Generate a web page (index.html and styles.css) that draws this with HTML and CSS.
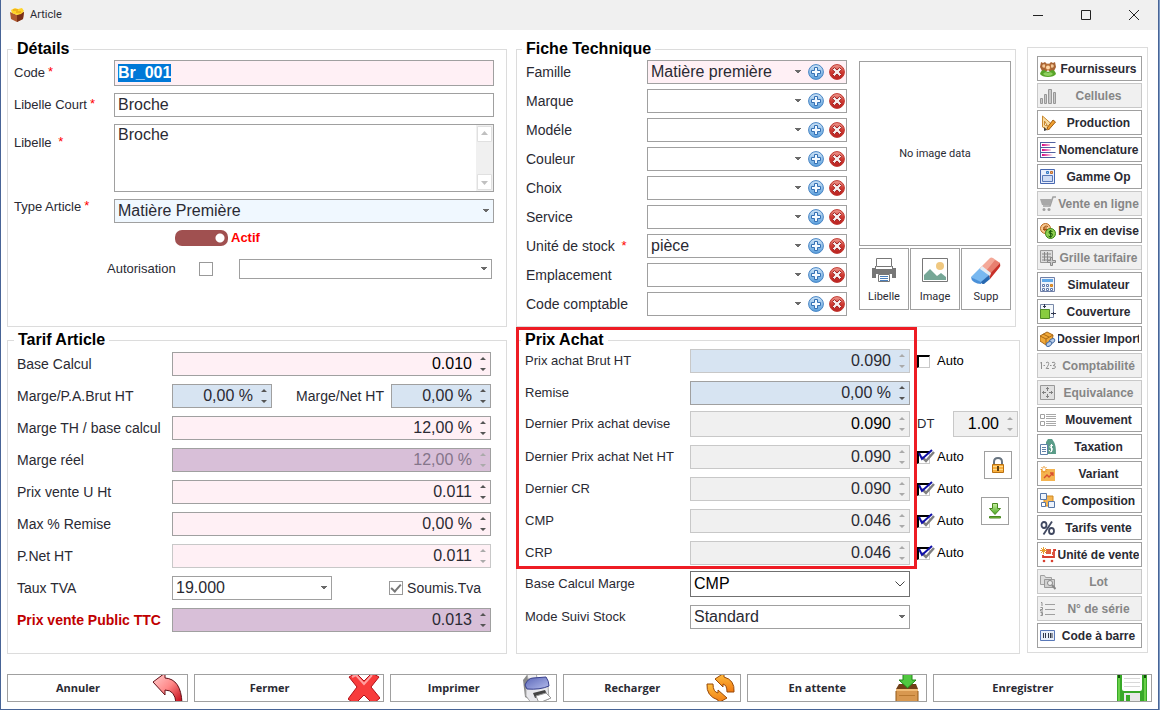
FILE: index.html
```html
<!DOCTYPE html>
<html lang="fr">
<head>
<meta charset="utf-8">
<title>Article</title>
<link rel="stylesheet" href="styles.css">
</head>
<body>
<svg class="sprite" aria-hidden="true">
  <defs>
    <linearGradient id="gBlue" x1="0" y1="0" x2="0" y2="1"><stop offset="0" stop-color="#cfe4f7"/><stop offset="1" stop-color="#5a9fdc"/></linearGradient>
    <linearGradient id="gRed" x1="0" y1="0" x2="0" y2="1"><stop offset="0" stop-color="#f0a096"/><stop offset=".5" stop-color="#d03a32"/><stop offset="1" stop-color="#b82020"/></linearGradient>
    <linearGradient id="gArrow" x1="0" y1="0" x2="1" y2="1"><stop offset="0" stop-color="#ffd0d0"/><stop offset=".5" stop-color="#f88"/><stop offset="1" stop-color="#c00010"/></linearGradient>
    <linearGradient id="gOrange" x1="0" y1="0" x2="0" y2="1"><stop offset="0" stop-color="#ffc040"/><stop offset="1" stop-color="#f07810"/></linearGradient>
    <linearGradient id="gPink" x1="0" y1="0" x2="1" y2="0"><stop offset="0" stop-color="#d8007c"/><stop offset="1" stop-color="#fff"/></linearGradient>
    <linearGradient id="gGreen" x1="0" y1="0" x2="0" y2="1"><stop offset="0" stop-color="#c8f0a0"/><stop offset="1" stop-color="#48a820"/></linearGradient>
    <linearGradient id="gLid" x1="0" y1="0" x2="1" y2="1"><stop offset="0" stop-color="#5a66b8"/><stop offset="1" stop-color="#b4bcec"/></linearGradient>
  </defs>
  <symbol id="caret" viewBox="0 0 8 4"><path d="M1 0h6v1H6v1H5v1H3V2H2V1H1z" fill="#6a6a6a"/></symbol>
  <symbol id="spin" viewBox="0 0 6 14"><path d="M0 3h6L3 0zM0 11h6l-3 3z" fill="currentColor"/></symbol>
  <symbol id="add" viewBox="0 0 16 16"><circle cx="8" cy="8" r="7.400" fill="url(#gBlue)" stroke="#4784c4"/><path d="M6.500 3.500h3v3h3v3h-3v3h-3v-3h-3v-3h3z" fill="#f4faff" stroke="#3470b4"/></symbol>
  <symbol id="del" viewBox="0 0 16 16"><circle cx="8" cy="8" r="7.400" fill="url(#gRed)" stroke="#c03830"/><path d="M5.400 3.600 8 6l2.600-2.400 2 2L10.200 8l2.400 2.400-2 2L8 10l-2.600 2.400-2-2L5.800 8 3.400 5.600z" fill="#f6eeee" stroke="#a02020"/></symbol>
  <symbol id="tick" viewBox="0 0 18 15"><path d="M5 8l4 4 8-9" fill="none" stroke="#808080" stroke-width="2.500"/><path d="M2 4l3 6L15 1" fill="none" stroke="#1010a8" stroke-width="2"/></symbol>
</svg>

<div class="window">
  <header class="titlebar">
    <svg width="16" height="16" viewBox="0 0 16 16"><path d="M1 5l7 3 7-3-1 7-6 3-6-3z" fill="#b05a30"/><path d="M8 8v7l6-3 1-7z" fill="#7a3018"/><path d="M2 3l4-2 3 1 4-1 2 3-3 3-4 1-5-2z" fill="#ffd428"/><path d="M4 3h5M7 5h5" stroke="#e09010"/></svg>
    <span class="title">Article</span>
    <button class="wbtn" aria-label="Réduire"><svg width="12" height="12"><path d="M1 6.500h10" stroke="#222"/></svg></button>
    <button class="wbtn" aria-label="Agrandir"><svg width="12" height="12"><path d="M1.500 1.500h9v9h-9z" fill="none" stroke="#222"/></svg></button>
    <button class="wbtn" aria-label="Fermer la fenêtre"><svg width="12" height="12"><path d="M1 1l10 10M11 1L1 11" stroke="#222"/></svg></button>
  </header>

  <main class="panels">
    <fieldset class="panel details">
      <legend>Détails</legend>
      <div class="row">
        <label for="code">Code<sup>*</sup></label>
        <input id="code" class="box pink code" type="text" value="Br_001">
      </div>
      <div class="row">
        <label for="court">Libelle Court<sup>*</sup></label>
        <input id="court" class="box" type="text" value="Broche">
      </div>
      <div class="row top">
        <label for="libelle">Libelle <sup>*</sup></label>
        <div class="box memo">
          <textarea id="libelle">Broche</textarea>
          <div class="scroll"><svg viewBox="0 0 15 16"><path d="M.5.500h14v15H.500z" fill="#fff" stroke="#e0e0e0"/><path d="M4 9h7L7.500 5z" fill="#c0c0c0"/></svg><svg viewBox="0 0 15 16"><path d="M.5.500h14v15H.500z" fill="#fff" stroke="#e0e0e0"/><path d="M4 7h7l-3.500 4z" fill="#c0c0c0"/></svg></div>
        </div>
      </div>
      <div class="row kind">
        <label for="type">Type Article<sup>*</sup></label>
        <div class="box alice combo"><select id="type"><option>Matière Première</option></select><svg class="caret"><use href="#caret"/></svg></div>
      </div>
      <label class="switch"><input type="checkbox" checked>Actif</label>
      <div class="auth">
        <label for="auth">Autorisation</label>
        <input id="auth" class="flatcheck" type="checkbox">
        <div class="box combo short"><select aria-label="Type d'autorisation"><option></option></select><svg class="caret"><use href="#caret"/></svg></div>
      </div>
    </fieldset>

    <fieldset class="panel fiche">
      <legend>Fiche Technique</legend>
      <div class="fiche-body">
        <div class="fiche-rows">
          <div class="row"><label for="f1">Famille</label><div class="box pink combo"><select id="f1"><option>Matière première</option></select><svg class="caret"><use href="#caret"/></svg><button class="ic" aria-label="Ajouter"><svg><use href="#add"/></svg></button><button class="ic" aria-label="Effacer"><svg><use href="#del"/></svg></button></div></div>
          <div class="row"><label for="f2">Marque</label><div class="box combo"><select id="f2"><option></option></select><svg class="caret"><use href="#caret"/></svg><button class="ic" aria-label="Ajouter"><svg><use href="#add"/></svg></button><button class="ic" aria-label="Effacer"><svg><use href="#del"/></svg></button></div></div>
          <div class="row"><label for="f3">Modéle</label><div class="box combo"><select id="f3"><option></option></select><svg class="caret"><use href="#caret"/></svg><button class="ic" aria-label="Ajouter"><svg><use href="#add"/></svg></button><button class="ic" aria-label="Effacer"><svg><use href="#del"/></svg></button></div></div>
          <div class="row"><label for="f4">Couleur</label><div class="box combo"><select id="f4"><option></option></select><svg class="caret"><use href="#caret"/></svg><button class="ic" aria-label="Ajouter"><svg><use href="#add"/></svg></button><button class="ic" aria-label="Effacer"><svg><use href="#del"/></svg></button></div></div>
          <div class="row"><label for="f5">Choix</label><div class="box combo"><select id="f5"><option></option></select><svg class="caret"><use href="#caret"/></svg><button class="ic" aria-label="Ajouter"><svg><use href="#add"/></svg></button><button class="ic" aria-label="Effacer"><svg><use href="#del"/></svg></button></div></div>
          <div class="row"><label for="f6">Service</label><div class="box combo"><select id="f6"><option></option></select><svg class="caret"><use href="#caret"/></svg><button class="ic" aria-label="Ajouter"><svg><use href="#add"/></svg></button><button class="ic" aria-label="Effacer"><svg><use href="#del"/></svg></button></div></div>
          <div class="row"><label for="f7">Unité de stock <sup>*</sup></label><div class="box combo"><select id="f7"><option>pièce</option></select><svg class="caret"><use href="#caret"/></svg><button class="ic" aria-label="Ajouter"><svg><use href="#add"/></svg></button><button class="ic" aria-label="Effacer"><svg><use href="#del"/></svg></button></div></div>
          <div class="row"><label for="f8">Emplacement</label><div class="box combo"><select id="f8"><option></option></select><svg class="caret"><use href="#caret"/></svg><button class="ic" aria-label="Ajouter"><svg><use href="#add"/></svg></button><button class="ic" aria-label="Effacer"><svg><use href="#del"/></svg></button></div></div>
          <div class="row"><label for="f9">Code comptable</label><div class="box combo"><select id="f9"><option></option></select><svg class="caret"><use href="#caret"/></svg><button class="ic" aria-label="Ajouter"><svg><use href="#add"/></svg></button><button class="ic" aria-label="Effacer"><svg><use href="#del"/></svg></button></div></div>
        </div>
        <div class="picture">
          <div class="preview">No image data</div>
          <div class="picture-tools">
            <button><svg width="32" height="32" viewBox="0 0 32 32"><path d="M8.500 4.500h15v8h-15z" fill="#fff" stroke="#777"/><path d="M4 14h3v-2h1v3h16v-3h1v2h3v10h-4v-4H8v4H4z" fill="#777"/><path d="M10.500 20.500h11v7h-11z" fill="#fff" stroke="#777"/><path d="M12 22.500h8M12 24.500h8M12 26.500h8" stroke="#4a7ebb"/></svg>Libelle</button>
            <button><svg width="32" height="32" viewBox="0 0 32 32"><path d="M3.500 4.500h25v23h-25z" fill="#fff" stroke="#777"/><circle cx="21" cy="12" r="4" fill="#f0c880"/><path d="M5 26v-5l6-6 7 7 4-3 5 4v3z" fill="#76a797"/></svg>Image</button>
            <button><svg width="32" height="32" viewBox="0 0 32 32"><path d="M10 14L20 4q1-1 3 0l7 5-11 12z" fill="#f4a898"/><path d="M16 17L25 6l5 3-11 13z" fill="#e88070"/><path d="M19 21L30 9q1 3-1 5L20 25z" fill="#c83028"/><path d="M1 23l9-9 9 7-8 8z" fill="#78b8f0"/><path d="M11 28l8-7 1 4-6 5q-3 0-3-2z" fill="#2868b0"/><path d="M1 23l10 5v2q-4 0-7-2-3-2-3-5z" fill="#4a90d8"/><path d="M12 12l9 7-1 3-10-7z" fill="#e4ecf4"/></svg>Supp</button>
          </div>
        </div>
      </div>
    </fieldset>

    <fieldset class="panel tarif">
      <legend>Tarif Article</legend>
      <div class="row"><label for="t1">Base Calcul</label><div class="box pink num black"><input id="t1" type="text" value="0.010"><svg><use href="#spin"/></svg></div></div>
      <div class="row"><label for="t2">Marge/P.A.Brut HT</label><div class="box blue num small"><input id="t2" type="text" value="0,00 %"><svg><use href="#spin"/></svg></div><label for="t3" class="second">Marge/Net HT</label><div class="box blue num small"><input id="t3" type="text" value="0,00 %"><svg><use href="#spin"/></svg></div></div>
      <div class="row"><label for="t4">Marge TH / base calcul</label><div class="box pink num"><input id="t4" type="text" value="12,00 %"><svg><use href="#spin"/></svg></div></div>
      <div class="row"><label for="t5">Marge réel</label><div class="box thistle num muted"><input id="t5" type="text" value="12,00 %" readonly><svg><use href="#spin"/></svg></div></div>
      <div class="row"><label for="t6">Prix vente U Ht</label><div class="box pink num"><input id="t6" type="text" value="0.011"><svg><use href="#spin"/></svg></div></div>
      <div class="row"><label for="t7">Max % Remise</label><div class="box pink num"><input id="t7" type="text" value="0,00 %"><svg><use href="#spin"/></svg></div></div>
      <div class="row"><label for="t8">P.Net HT</label><div class="box pink num locked"><input id="t8" type="text" value="0.011" readonly><svg><use href="#spin"/></svg></div></div>
      <div class="row"><label for="t9">Taux TVA</label><div class="box combo rate"><select id="t9"><option>19.000</option></select><svg class="caret"><use href="#caret"/></svg></div><label class="taxed"><input class="flatcheck" type="checkbox" checked>Soumis.Tva</label></div>
      <div class="row"><label for="t10" class="ttc">Prix vente Public TTC</label><div class="box thistle num"><input id="t10" type="text" value="0.013"><svg><use href="#spin"/></svg></div></div>
    </fieldset>

    <fieldset class="panel prix">
      <legend>Prix Achat</legend>
      <div class="stack">
        <div class="row"><label for="p1">Prix achat Brut HT</label><div class="box blue num locked"><input id="p1" type="text" value="0.090" readonly><svg><use href="#spin"/></svg></div><div class="side"><label class="auto"><input type="checkbox">Auto</label></div></div>
        <div class="row"><label for="p2">Remise</label><div class="box blue num"><input id="p2" type="text" value="0,00 %"><svg><use href="#spin"/></svg></div><div class="side"></div></div>
      </div>
      <div class="row tall"><label for="p3">Dernier Prix achat devise</label><div class="box grey num black locked"><input id="p3" type="text" value="0.090" readonly><svg><use href="#spin"/></svg></div><div class="side"><label for="p4">DT</label><div class="box grey num black locked"><input id="p4" type="text" value="1.00" readonly><svg><use href="#spin"/></svg></div></div></div>
      <div class="stack costs">
        <div class="row"><label for="p5">Dernier Prix achat Net HT</label><div class="box grey num locked"><input id="p5" type="text" value="0.090" readonly><svg><use href="#spin"/></svg></div><div class="side"><label class="auto"><input type="checkbox" checked><svg><use href="#tick"/></svg>Auto</label></div></div>
        <div class="row"><label for="p6">Dernier CR</label><div class="box grey num locked"><input id="p6" type="text" value="0.090" readonly><svg><use href="#spin"/></svg></div><div class="side"><label class="auto"><input type="checkbox" checked><svg><use href="#tick"/></svg>Auto</label></div></div>
        <div class="row"><label for="p7">CMP</label><div class="box grey num locked"><input id="p7" type="text" value="0.046" readonly><svg><use href="#spin"/></svg></div><div class="side"><label class="auto"><input type="checkbox" checked><svg><use href="#tick"/></svg>Auto</label></div></div>
        <div class="row"><label for="p8">CRP</label><div class="box grey num locked"><input id="p8" type="text" value="0.046" readonly><svg><use href="#spin"/></svg></div><div class="side"><label class="auto"><input type="checkbox" checked><svg><use href="#tick"/></svg>Auto</label></div></div>
        <div class="tools">
          <button aria-label="Verrouiller"><svg width="16" height="16" viewBox="0 0 16 16"><path d="M4 8V5q0-4 4-4t4 4v3" fill="none" stroke="#687480" stroke-width="2"/><path d="M2.500 7.500h11v8h-11z" fill="#f8b040" stroke="#b87010"/><path d="M3 9.500h10M3 12.500h10" stroke="#ffd888"/><path d="M7 9h2v5H7z" fill="#604010"/></svg></button>
          <button class="fetch" aria-label="Télécharger"><svg width="16" height="16" viewBox="0 0 16 16"><path d="M5.500.500h5v5h3L8 11.500 2.500 5.500h3z" fill="url(#gGreen)" stroke="#488820"/><path d="M2.500 13.500h11v1.500h-11z" fill="#80c840" stroke="#488820"/></svg></button>
        </div>
      </div>
      <div class="row tall"><label for="p9">Base Calcul Marge</label><div class="box combo native"><select id="p9"><option>CMP</option></select><svg width="12" height="8" viewBox="0 0 12 8"><path d="M1.500 1.500L6 6l4.500-4.500" fill="none" stroke="#444"/></svg></div><div class="side"></div></div>
      <div class="row"><label for="p10">Mode Suivi Stock</label><div class="box combo"><select id="p10"><option>Standard</option></select><svg class="caret"><use href="#caret"/></svg></div><div class="side"></div></div>
      <div class="highlight"></div>
    </fieldset>

    <nav class="sidebar">
      <button><svg viewBox="0 0 16 16"><path d="M1 1l2 1 2-1 2 2 1 3-1 4H2L0 6zM15 1l-2 1-2-1-2 2-1 3 1 4h5l2-4z" fill="#a86434"/><circle cx="4" cy="5" r="1.800" fill="#f4c898"/><circle cx="12" cy="5" r="1.800" fill="#f4c898"/><path d="M5 4q3-3 6 0v4q-3 3-6 0z" fill="#b87038"/><circle cx="8" cy="6.500" r="2" fill="#ffd8a8"/><path d="M0 13q1-4 4-4l4 2 4-2q3 0 4 4-2 3-8 3t-8-3z" fill="#58a428"/><path d="M3 13q2-3 5-1 3-2 5 1-2 2-5 2t-5-2z" fill="#90d060"/></svg><span>Fournisseurs</span></button>
      <button disabled><svg viewBox="0 0 16 16"><path d="M.5 10.500h2v5h-2zM4.500 6.500h2v9h-2zM8.500 1.500h3v14h-3zM13.500 4.500h2v11h-2z" fill="#c8c8c8" stroke="#989898"/></svg><span>Cellules</span></button>
      <button><svg viewBox="0 0 16 16"><path d="M2.500 1v11l5 3 4-6z" fill="#f8dca0" stroke="#c88830"/><path d="M4.500 6v4l3 1z" fill="#fff" stroke="#c88830"/><path d="M7 13l6-8 2.500 2-7 8z" fill="#f0a030" stroke="#a05c10"/><path d="M4 12l3 3-3 1z" fill="#444"/></svg><span>Production</span></button>
      <button><svg viewBox="0 0 16 16"><path d="M.5 0v16M.500.500h15M.500 5.500h15M.500 10.500h15M.500 15.500h15" stroke="#5060a0" fill="none"/><path d="M2 2h8v2H2zM2 7h9v2H2zM2 12h11v2H2z" fill="url(#gPink)"/></svg><span>Nomenclature</span></button>
      <button><svg viewBox="0 0 16 16"><path d="M.5.500h14v14H.500z" fill="#e8eefc" stroke="#4868b0"/><path d="M6.500 2.500h2v2h-2z" fill="#90c0f0" stroke="#3a78c0"/><path d="M10.500 2.500h2v2h-2z" fill="#f0b070" stroke="#c07030"/><path d="M2.500 6.500h10v6h-10z" fill="#d0dcf4" stroke="#5878b8"/></svg><span>Gamme Op</span></button>
      <button disabled><svg viewBox="0 0 16 16"><path d="M16 1h-3l-3 9H3" fill="none" stroke="#a0a0a0" stroke-width="1.500"/><path d="M0 3h12l-2 6H2z" fill="#a8a8a8"/><circle cx="4" cy="13.500" r="1.500" fill="#a0a0a0"/><circle cx="9" cy="13.500" r="1.500" fill="#a0a0a0"/></svg><span>Vente en ligne</span></button>
      <button><svg viewBox="0 0 16 16"><circle cx="5.500" cy="5.500" r="5" fill="#f8c890" stroke="#b86820"/><path d="M8 3.500Q4 2 4 5.500T8 8M3 5h4M3 6.500h4" fill="none" stroke="#a05010"/><circle cx="10.500" cy="10.500" r="5" fill="#90d050" stroke="#388018"/><path d="M12.500 8.500Q9 7 9 9t2 1.500 1 2.300-3.500.2M10.600 7v7.500" fill="none" stroke="#185808"/></svg><span>Prix en devise</span></button>
      <button disabled><svg viewBox="0 0 16 16"><path d="M.5.500h12v12H.500z" fill="#ddd" stroke="#999"/><path d="M2 4h9M2 7h9M2 10h9M4.500 2v9M7.500 2v9" stroke="#888"/><path d="M10.500 7.500h2v3h3v2h-3v3h-2v-3h-3v-2h3z" fill="#ccc" stroke="#888"/></svg><span>Grille tarifaire</span></button>
      <button><svg viewBox="0 0 16 16"><path d="M.5.500h14v14H.500z" fill="#eef2fa" stroke="#7080a8"/><path d="M2 2h11v3H2z" fill="#60a8e8"/><path d="M2.500 7.500h2v2h-2zM6.500 7.500h2v2h-2zM2.500 11.500h2v2h-2zM6.500 11.500h2v2h-2zM10.500 11.500h2v2h-2z" fill="#fff" stroke="#6078a8"/><path d="M10.500 7.500h2v2h-2z" fill="#f0a030" stroke="#d08020"/></svg><span>Simulateur</span></button>
      <button><svg viewBox="0 0 16 16"><path d="M.5.500h13v13H.500z" fill="#f4f8fc" stroke="#7888a8"/><path d="M.5 5.500h9v9h-9z" fill="#88cc40" stroke="#508828"/><path d="M4.500 0v4M3 2.500h3M11 9.500h5M13.500 8v3" stroke="#303850"/></svg><span>Couverture</span></button>
      <button><svg viewBox="0 0 16 16"><path d="M0 5l7-4 6 3-1 7-6 3-6-4z" fill="#f0a838" stroke="#a86818"/><path d="M0 5l6 3 7-4M6 8v6M3 3l6 3" fill="none" stroke="#a86818"/><ellipse cx="12" cy="10" rx="3" ry="2" transform="rotate(-35 12 10)" fill="#b8cce8" stroke="#4870a8"/><ellipse cx="9" cy="13" rx="3" ry="2" transform="rotate(-35 9 13)" fill="#b8cce8" stroke="#4870a8"/></svg><span>Dossier Import</span></button>
      <button disabled><svg viewBox="0 0 16 16"><path d="M0 5.500l1.500-1.500V11M3.500 7.500h1.500M6 5q1-1.500 2.500-.5 1 1.500-2.300 6H9M10 7.500h1.500M12 4.500q3-1 3 1t-2 2q2.500 0 2.500 1.500 0 2-3.500 1.500" fill="none" stroke="#909090"/></svg><span>Comptabilité</span></button>
      <button disabled><svg viewBox="0 0 16 16"><path d="M.5.500h14v14H.500z" fill="#e0e0e0" stroke="#999"/><path d="M7.500 2v4M6 3.500h3M7.500 9v4M6 11.500h3M2 7.500h4M3.500 6v3M9 7.500h4M11.500 6v3" stroke="#808080"/></svg><span>Equivalance</span></button>
      <button><svg viewBox="0 0 16 16"><path d="M.5 2.500h4v4h-4zM.500 9.500h4v4h-4z" fill="#fff" stroke="#a0a0a0"/><path d="M6 2.500h10M6 4.500h10M6 6.500h10M6 9.500h10M6 11.500h10M6 13.500h10" stroke="#a8a8a8"/></svg><span>Mouvement</span></button>
      <button><svg viewBox="0 0 16 16"><path d="M6 3l2-3h4l2 3q2 3 2 12H6z" fill="#5a9c88"/><path d="M13 6.500Q10 5.500 10 7.500t1.500 1.500T12 11.500t-3-.5M11.500 5v8" fill="none" stroke="#fff"/><path d="M.5 5.500h7v10h-7z" fill="#fff" stroke="#6080a8"/><path d="M2 8.500h4M2 10.500h4M2 12.500h4" stroke="#6080a8"/></svg><span>Taxation</span></button>
      <button><svg viewBox="0 0 16 16"><path d="M1 3h14v12H1z" fill="#f4b450"/><path d="M4 12l3-3 2 2 4-4M10 7h3v3" fill="none" stroke="#d85030" stroke-width="1.300"/><path d="M4 0v7M.5 3.500h7M1.500 1l5 5M6.500 1l-5 5" stroke="#e89020"/><circle cx="4" cy="3.500" r="1.500" fill="#fff"/></svg><span>Variant</span></button>
      <button><svg viewBox="0 0 16 16"><path d="M4 3h9v10H4z" fill="#f4b450" stroke="#d08820"/><path d="M.5.500h6v6h-6zM8.500 8.500h6v6h-6z" fill="#eef4fc" stroke="#5878a8"/><path d="M1.500 9.500h4v4h-4z" fill="#fff" stroke="#5878a8"/></svg><span>Composition</span></button>
      <button><svg viewBox="0 0 16 16"><ellipse cx="4" cy="5" rx="2.500" ry="3" fill="none" stroke="#404860" stroke-width="1.800"/><ellipse cx="11.500" cy="11" rx="2.500" ry="3" fill="none" stroke="#404860" stroke-width="1.800"/><path d="M12 1.500L3.500 14.500" stroke="#404860" stroke-width="1.800"/></svg><span>Tarifs vente</span></button>
      <button><svg viewBox="0 0 16 16"><path d="M6 2h5v5H6zM12 5h1v3h-1z" fill="#e06040"/><path d="M16 3h-2v7H3V8" fill="none" stroke="#d84030" stroke-width="1.800"/><circle cx="4" cy="14" r="1.300" fill="#d84030"/><circle cx="12" cy="14" r="1.300" fill="#d84030"/><path d="M3.500 0v7M0 3.500h7M1 1l5 5M6 1L1 6" stroke="#e8a030"/></svg><span>Unité de vente</span></button>
      <button disabled><svg viewBox="0 0 16 16"><path d="M.5 1.500h4l1 2h6v7H.500z" fill="#ddd" stroke="#a0a0a0"/><path d="M4.500 5.500h10v8h-10z" fill="#d0d0d0" stroke="#999"/><circle cx="10" cy="9" r="2.500" fill="#eee" stroke="#888"/><path d="M12 11l3.500 4" stroke="#888" stroke-width="2"/></svg><span>Lot</span></button>
      <button disabled><svg viewBox="0 0 16 16"><path d="M5 3.500h10M5 8.500h10M5 13.500h10" stroke="#a0a0a0"/><path d="M1 1.500h1V5M.5 6.500h2v2h-2v1.500H3M.500 11.500h2v3h-2M1 13h1.500" fill="none" stroke="#909090"/></svg><span>N° de série</span></button>
      <button><svg viewBox="0 0 16 16"><path d="M.5 2.500h14v10H.500z" fill="#e8eef8" stroke="#5878b8"/><path d="M3.500 5v5M5.500 5v5M8.500 5v5M10.500 5v5M12 5v5" stroke="#303848"/></svg><span>Code à barre</span></button>
    </nav>
  </main>

  <footer class="actions">
    <button class="a1"><span>Annuler</span><svg viewBox="0 0 32 28"><path d="M1 8L13-1v5q16 1 17 25h-6q-1-13-11-13v5z" fill="url(#gArrow)" stroke="#601018"/></svg></button>
    <button class="a2"><span>Fermer</span><svg viewBox="0 0 32 28"><path d="M1 3l7-4 8 8 8-8 7 4-8 10 9 11-7 6-9-9-9 9-7-5 9-12z" fill="#f83c3c" stroke="#b01018"/><path d="M4 3l4-2 8 9 8-9" fill="none" stroke="#ffa0a0" stroke-width="2"/></svg></button>
    <button class="a3"><span>Imprimer</span><svg viewBox="0 0 32 28"><path d="M2 6l4-5 8 4-3 22-7-4z" fill="#888"/><path d="M6 0l9-3 1 8H7z" fill="#f0f0f0" stroke="#aaa"/><path d="M5 14l22-2 1 13-17 5-6-8z" fill="#e8e8ec" stroke="#aaa"/><path d="M4 11q3-7 8-7l13-1q3 4 3 9-9 4-22 3z" fill="url(#gLid)" stroke="#38408c"/><path d="M12 19l12-3 2 4-12 4z" fill="#444"/><path d="M15 22l10-3 5 5-12 5z" fill="#fff" stroke="#999"/></svg></button>
    <button class="a4"><span>Recharger</span><svg viewBox="0 0 32 28"><path d="M10 5L19-1l0 4q11 3 10 15h-7q0-7-4-8v3z" fill="url(#gOrange)" stroke="#984808"/><path d="M22 24l-9 5v-3Q1 22 2 10h6q0 8 5 9v-3z" fill="url(#gOrange)" stroke="#984808"/></svg></button>
    <button class="a5"><span>En attente</span><svg viewBox="0 0 32 28"><path d="M8 10h17l2 5H5z" fill="#704018"/><path d="M5 15h22v14H5z" fill="#d89850"/><path d="M5 15h22v2H5z" fill="#f0bc78"/><path d="M5 17v12M27 17v12" stroke="#905818"/><path d="M8 21.500h16" stroke="#b87830"/><path d="M12-1h9v7h4l-8.500 8L8 6h4z" fill="#50c840" stroke="#208818"/></svg></button>
    <button class="a6"><span>Enregistrer</span><svg viewBox="0 0 32 28"><path d="M1-1h30v30H1z" fill="#38a828"/><path d="M3-1v30M29-1v30" stroke="#68d048" stroke-width="2"/><path d="M6-1h20v16q0 2-2 2H8q-2 0-2-2z" fill="#fff"/><path d="M8 4.500h16M8 8.500h16M8 12.500h16" stroke="#d8d8d8"/><path d="M8 19h16v10H8z" fill="#e8e8e8"/><path d="M10 21h4v8h-4z" fill="#38a828"/><path d="M2 1h2v3H2zM28 1h2v3h-2z" fill="#105008"/></svg></button>
  </footer>
</div>
<script src="app.js"></script>
</body>
</html>
```
FILE: styles.css
```css
* { box-sizing: border-box; }

body {
  margin: 0;
  padding-right: 1px;
  min-height: 100vh;
  display: flex;
  background: #7f9cc6;
  color: #2a2a33;
  font: 13px/16px "Liberation Sans", sans-serif;
}

button, input, select, textarea { font: inherit; color: inherit; }

button { background: #fff; border: 1px solid #a0a0a0; padding: 0; }

.sprite { position: absolute; width: 0; height: 0; }

.window {
  flex: 1;
  min-width: 0;
  display: flex;
  flex-direction: column;
  background: #fff;
  border: 1px solid #486496;
  border-top: 0;
}

/* Title bar */
.titlebar {
  height: 30px;
  display: flex;
  align-items: center;
  padding-left: 8px;
  background: #f0f0f0;
}
.title { flex: 1; padding-left: 5px; font: 11px/16px "Roboto", sans-serif; }
.wbtn { width: 48px; height: 30px; border: 0; background: none; }
.wbtn svg { display: block; margin: auto; }

/* Panels */
.panels {
  display: grid;
  grid-template-columns: minmax(0, 502fr) minmax(0, 504fr) 121px;
  grid-template-rows: auto auto;
  column-gap: 7px;
  row-gap: 4px;
  padding: 10px 10px 0 6px;
}

.panel {
  position: relative;
  min-width: 0;
  margin: 0;
  border: 1px solid #dcdcdc;
}
.panel legend {
  padding: 0 4px;
  color: #000;
  font: bold 16px/18px "Liberation Sans", sans-serif;
}

.row { display: flex; align-items: center; }
.row > label:first-child { flex: none; white-space: nowrap; }
sup {
  display: inline-block;
  padding-left: 3px;
  color: #f00;
  line-height: 10px;
  font-size: 13px;
  vertical-align: 1px;
}

.box {
  flex: 1;
  min-width: 0;
  height: 24px;
  background: #fff;
  border: 1px solid #a0a0a0;
  padding: 0 3px;
  font-size: 16px;
}
.box input, .box select, .box textarea {
  min-width: 0;
  border: 0;
  padding: 0;
  background: none;
  outline: none;
  appearance: none;
}
.box.pink { background: #fff0f5; }
.box.blue { background: #d7e4f2; }
.box.alice { background: #f0f8ff; }
.box.thistle { background: #d8bfd8; }
.box.grey { background: #f0f0f0; }

.combo { display: flex; align-items: center; }
.combo select { flex: 1; height: 22px; }
.caret { flex: none; width: 8px; height: 4px; }
.ic { width: 16px; height: 16px; border: 0; background: none; margin-left: 5px; }
.ic svg { display: block; width: 16px; height: 16px; }
.caret + .ic { margin-left: 6px; }

.num { display: flex; align-items: center; gap: 8px; padding-right: 4px; }
.num input { flex: 1; width: 0; height: 22px; text-align: right; }
.num svg { flex: none; width: 6px; height: 14px; color: #555; }
.num.black { color: #000; }
.num.muted { color: #85758a; }
.num.locked { border-color: #c8c8c8; }
.num.locked svg, .num.muted svg { color: #aaa; }

.flatcheck {
  appearance: none;
  width: 14px;
  height: 14px;
  margin: 0;
  background: #fff;
  border: 1px solid #999;
}
.flatcheck:checked::before {
  content: "";
  display: block;
  width: 4px;
  height: 8px;
  margin: 0 auto;
  border: solid #777;
  border-width: 0 2px 2px 0;
  transform: rotate(42deg);
}

/* Détails */
.details {
  display: flex;
  flex-direction: column;
  gap: 7px;
  margin-right: 2px;
  padding: 2px 12px 0 6px;
}
.details legend { margin-left: -1px; }
.details .row > label { width: 100px; }
.details .code { height: 26px; font-weight: bold; outline: none; }
.code::selection { background: #0078d7; color: #fff; }
.row.top { align-items: flex-start; }
.row.top label { padding-top: 11px; }
.row.kind label { padding-bottom: 8px; }
.memo { display: flex; height: 68px; padding-right: 0; }
.memo textarea { flex: 1; resize: none; line-height: 20px; overflow: hidden; }
.scroll {
  display: flex;
  flex-direction: column;
  justify-content: space-between;
  width: 17px;
  padding: 1px;
  background: #f0f0f0;
}
.scroll svg { width: 15px; height: 16px; }
.switch {
  display: flex;
  align-items: center;
  gap: 3px;
  padding-left: 161px;
  color: #f00;
  font-weight: bold;
}
.switch input {
  appearance: none;
  width: 53px;
  height: 16px;
  margin: 0;
  border-radius: 7px;
  background: radial-gradient(circle at 45px 8px, #fff 4px, #a05050 5px);
}
.auth { display: flex; align-items: center; padding: 6px 2px 0 93px; }
.auth .flatcheck { margin: 0 26px 0 23px; }
.box.short { height: 20px; }
.box.short select { height: 18px; }

/* Fiche technique */
.fiche { margin-right: 4px; padding: 2px 4px 10px 9px; font-size: 14px; }
.fiche legend, .prix legend { margin-left: -4px; }
.fiche-body { display: flex; gap: 12px; }
.fiche-rows { flex: 1; min-width: 0; display: grid; gap: 5px; }
.fiche .row > label { width: 121px; }
.fiche .combo { padding-right: 1px; }
.picture { width: 152px; display: flex; flex-direction: column; gap: 2px; padding: 1px 0 6px; font: 11px/14px "Roboto", sans-serif; }
.preview { flex: 1; display: grid; place-items: center; border: 1px solid #a0a0a0; }
.picture-tools { display: grid; grid-template-columns: 1fr 1fr 1fr; gap: 1px; }
.picture-tools button { height: 62px; }
.picture-tools svg { display: block; margin: 0 auto 4px; }

/* Tarif */
.tarif {
  display: flex;
  flex-direction: column;
  gap: 8px;
  margin-right: 2px;
  padding: 3px 15px 21px 9px;
  font-size: 14px;
}
.tarif legend { margin-left: -3px; }
.tarif .row > label:first-child { width: 155px; }
.box.small { flex: 0 0 100px; }
.tarif .second { margin: 0 7px 0 auto; white-space: nowrap; }
.box.rate { flex: 0 0 160px; }
.taxed { display: flex; align-items: center; gap: 4px; margin: 0 10px 0 auto; }
.tarif .ttc { color: #c00000; font-weight: bold; }

/* Prix achat */
.prix { padding: 0 0 20px 8px; }
.prix .row > label:first-child { width: 165px; }
.stack { display: grid; gap: 8px; }
.row.tall { margin: 6px 0 8px; }
.row.tall .box { height: 26px; }
.side { flex: none; width: 109px; display: flex; align-items: center; padding-left: 7px; }
.side .box { margin: 0 1px 0 auto; flex: 0 0 65px; }
.auto { position: relative; display: flex; align-items: center; gap: 7px; color: #000; }
.auto input {
  appearance: none;
  width: 13px;
  height: 13px;
  margin: 0;
  background: #fff;
  border: solid;
  border-width: 2px 1px 1px 2px;
  border-color: #000 #c8c8c8 #c8c8c8 #000;
}
.auto svg { position: absolute; left: 0; top: 0; width: 18px; height: 15px; }
.costs { position: relative; }
.tools { position: absolute; right: 7px; top: 6px; display: grid; gap: 18px; }
.tools button { width: 28px; height: 28px; display: grid; place-items: center; }
.tools .fetch { margin-left: -3px; }
.box.native { border-color: #707070; color: #000; }
.highlight {
  position: absolute;
  left: -1px;
  right: 102px;
  top: -22px;
  bottom: 84px;
  border: 3px solid #ee1c24;
  pointer-events: none;
}

/* Sidebar */
.sidebar {
  grid-column: 3;
  grid-row: 1 / 3;
  align-self: start;
  display: grid;
  gap: 2px;
  margin-top: 7px;
  padding: 8px 5px 4px 9px;
  border: 1px solid #dcdcdc;
}
.sidebar button {
  display: flex;
  align-items: center;
  gap: 2px;
  min-width: 0;
  height: 25px;
  padding: 0 2px;
  font-size: 12px;
  font-weight: bold;
}
.sidebar svg { flex: none; width: 16px; height: 16px; }
.sidebar span {
  flex: 1;
  min-width: 0;
  display: flex;
  justify-content: center;
  overflow: hidden;
  white-space: nowrap;
}
.sidebar button:disabled { background: #f0f0f0; border-color: #c8c8c8; color: #868686; }

/* Actions */
.actions { display: flex; gap: 6px; margin-top: auto; padding: 20px 6px 7px; }
.actions button {
  flex: 1 1 0;
  display: flex;
  align-items: stretch;
  height: 28px;
  padding-right: 3px;
  overflow: hidden;
  font: bold 11px/26px "Open Sans", sans-serif;
}
.actions span { flex: 1; padding-right: 4px; }
.actions svg { flex: none; width: 32px; height: 28px; margin-top: -1px; }
.actions .a1 { flex-grow: 181; }
.actions .a2 { flex-grow: 190; }
.actions .a3 { flex-grow: 166; }
.actions .a4 { flex-grow: 178; }
.actions .a5 { flex-grow: 180; }
.actions .a6 { flex-grow: 220; }
```
FILE: app.js
```js
const code = document.getElementById("code");
code.focus();
code.select();
```
